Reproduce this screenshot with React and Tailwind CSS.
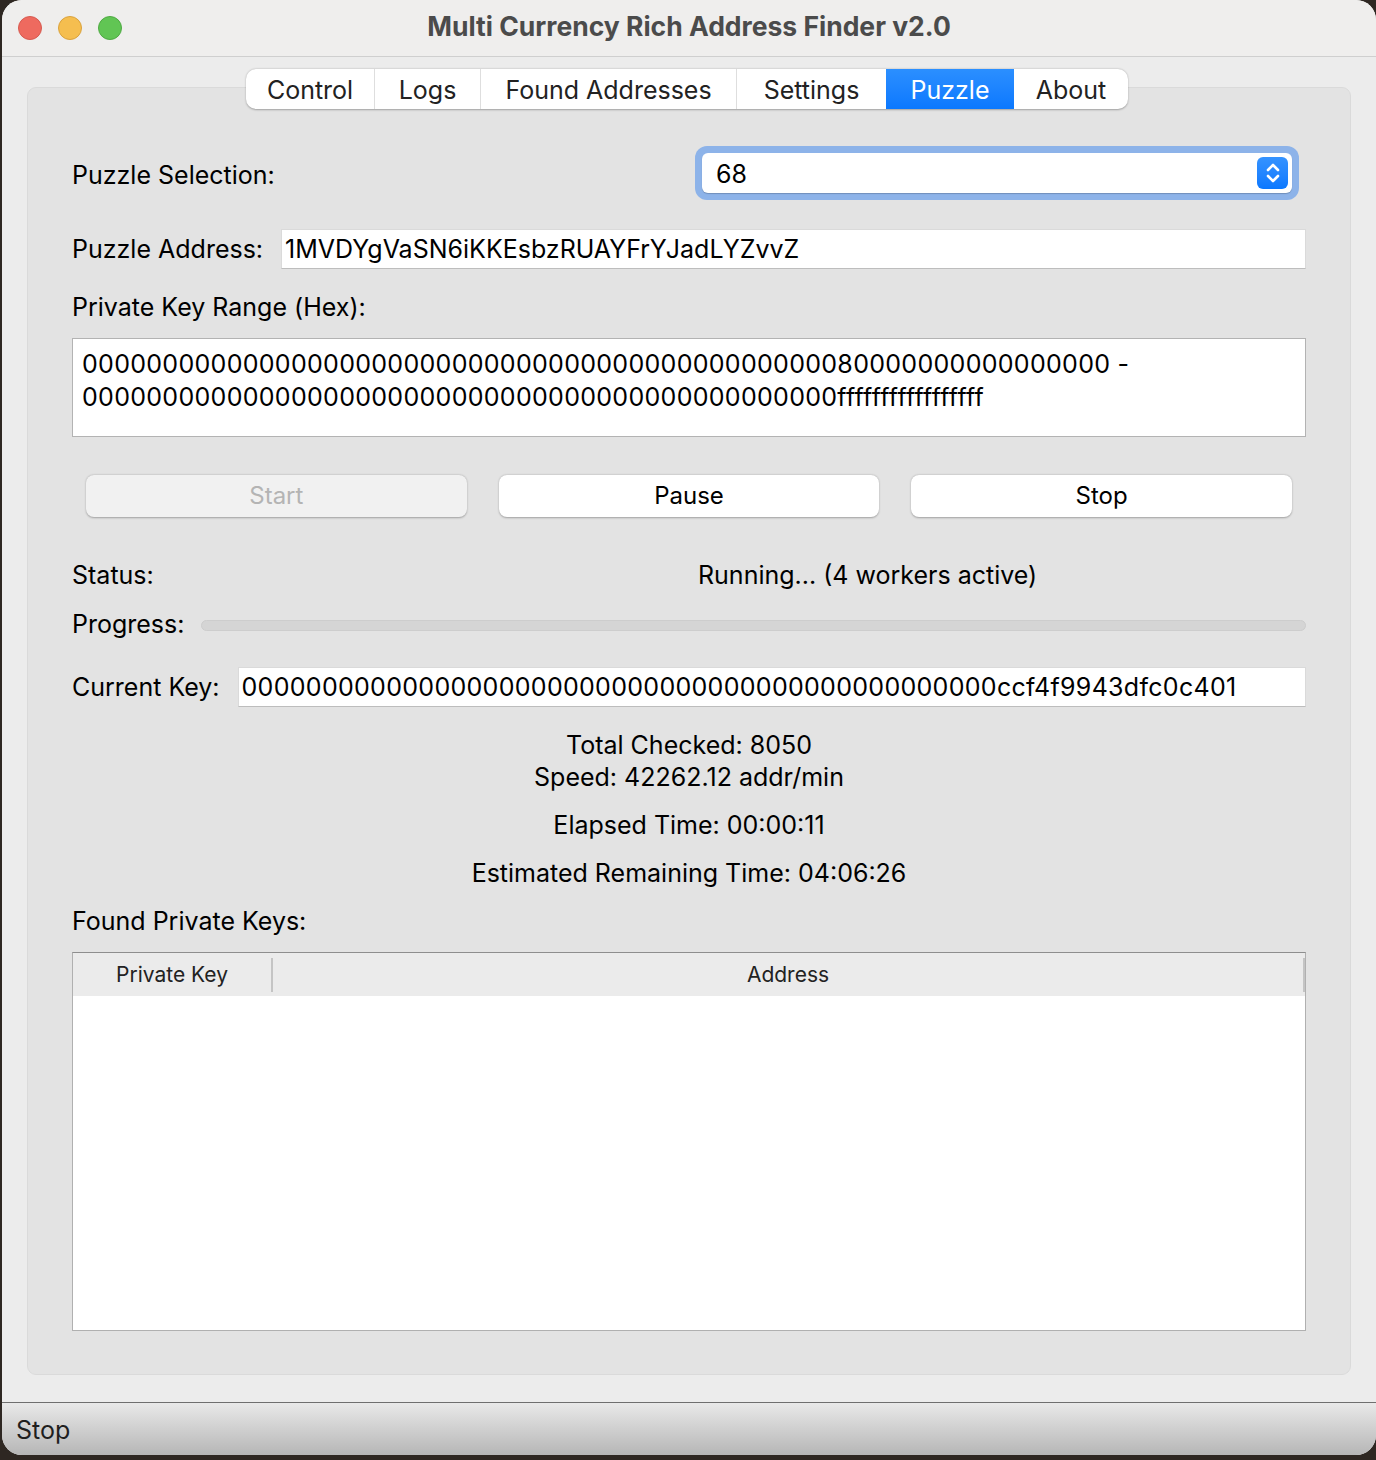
import React from "react";

const tabs = [
  { name: "Control", w: "w-[128px]" },
  { name: "Logs", w: "w-[106px]" },
  { name: "Found Addresses", w: "w-[256px]" },
  { name: "Settings", w: "w-[150px]" },
  { name: "Puzzle", w: "w-[128px]", active: true },
  { name: "About", w: "w-[114px]" },
];

const zeros = "0".repeat(47);

function Tabs() {
  return (
    <div className="relative z-10 flex justify-center pr-[4px]">
      <div className="flex h-[40px] rounded-[10px] bg-white shadow-[0_0.5px_2px_rgba(0,0,0,0.3)] overflow-hidden">
        {tabs.map((t, i) => (
          <div
            key={t.name}
            className={`${t.w} flex items-center justify-center pt-[3px] text-[25px] ${
              t.active
                ? "bg-gradient-to-b from-[#2b8fff] to-[#0a78ff] text-white"
                : "text-[#222]"
            } ${i > 0 && !t.active && !tabs[i - 1].active ? "border-l border-[#dedede]" : ""}`}
          >
            {t.name}
          </div>
        ))}
      </div>
    </div>
  );
}

function Field({ children, className = "" }) {
  return (
    <div
      className={`h-[40px] bg-white border border-[#dadada] border-b-[#bdbdbd] flex items-center pt-[2px] text-[25px] text-black ${className}`}
    >
      {children}
    </div>
  );
}

function Button({ label, disabled }) {
  return (
    <div
      className={`h-[42px] rounded-[8px] flex items-center justify-center text-[24px] shadow-[0_0.5px_2px_rgba(0,0,0,0.3)] ${
        disabled ? "bg-[#f1f1f1] text-[#b4b4b4]" : "bg-white text-black"
      }`}
    >
      {label}
    </div>
  );
}

export default function App() {
  return (
    <div className="min-h-screen bg-[#2e2722] pl-[2px] font-['Inter',sans-serif]">
      <div className="w-[1374px] h-[1455px] rounded-[20px] overflow-hidden flex flex-col bg-[#ececec]">
        {/* title bar */}
        <div className="h-[57px] shrink-0 bg-[#efeeed] border-b border-[#cfcfcf] grid grid-cols-[1fr_auto_1fr] items-center">
          <div className="flex gap-[16px] pl-[16px]">
            <span className="w-[24px] h-[24px] rounded-full bg-[#ee6a5f] border border-[#d65a50]" />
            <span className="w-[24px] h-[24px] rounded-full bg-[#f5be4f] border border-[#d9a23e]" />
            <span className="w-[24px] h-[24px] rounded-full bg-[#61c554] border border-[#4fa943]" />
          </div>
          <div className="text-[26.5px] font-bold text-[#4b4b4b] pb-[2px]">
            Multi Currency Rich Address Finder v2.0
          </div>
          <div />
        </div>

        {/* content */}
        <div className="flex-1 px-[25px] pt-[12px]">
          <Tabs />
          <div className="-mt-[22px] h-[1288px] rounded-[9px] bg-[#e3e3e3] border border-[#dadada] px-[44px] pt-[58px] text-[25px] text-black">
            {/* puzzle selection */}
            <div className="h-[54px] flex items-center">
              <div className="flex-1 pt-[5px]">Puzzle Selection:</div>
              <div className="w-[604px] mr-[7px] h-[54px] rounded-[12px] bg-[#8db3e9] p-[7px]">
                <div className="h-full rounded-[6px] bg-white flex items-center pl-[14px] pr-[4px] shadow-[0_1px_1px_rgba(0,0,0,0.2)]">
                  <span className="flex-1 pt-[3px]">68</span>
                  <div className="w-[31px] h-[32px] rounded-[6px] bg-gradient-to-b from-[#3593ff] to-[#0a78ff] flex items-center justify-center">
                    <svg width="16" height="24" viewBox="0 0 16 24" fill="none" stroke="white" strokeWidth="2.6" strokeLinecap="round" strokeLinejoin="round">
                      <path d="M3 9l5-5 5 5" />
                      <path d="M3 15l5 5 5-5" />
                    </svg>
                  </div>
                </div>
              </div>
            </div>

            {/* puzzle address */}
            <div className="mt-[29px] flex items-center gap-[18px]">
              <div className="whitespace-nowrap pt-[2px]">Puzzle Address:</div>
              <Field className="flex-1 pl-[3px]">1MVDYgVaSN6iKKEsbzRUAYFrYJadLYZvvZ</Field>
            </div>

            <div className="mt-[23px] h-[30px] flex items-center pt-[2px]">Private Key Range (Hex):</div>

            <div className="mt-[16px] h-[99px] bg-white border border-[#b3b3b3] px-[9px] pt-[9px] leading-[33px] tracking-[0.3px]">
              <div>{zeros}80000000000000000 -</div>
              <div>{zeros}fffffffffffffffff</div>
            </div>

            {/* buttons */}
            <div className="mt-[38px] px-[14px] grid grid-cols-3 gap-[32px]">
              <Button label="Start" disabled />
              <Button label="Pause" />
              <Button label="Stop" />
            </div>

            {/* status */}
            <div className="mt-[40px] h-[30px] grid grid-cols-[626px_1fr] items-center">
              <div>Status:</div>
              <div>Running... (4 workers active)</div>
            </div>

            {/* progress */}
            <div className="mt-[23px] h-[30px] flex items-center gap-[17px]">
              <div>Progress:</div>
              <div className="flex-1 h-[11px] rounded-full bg-[#d5d5d5] border border-[#cdcdcd]" />
            </div>

            {/* current key */}
            <div className="mt-[27px] flex items-center gap-[18px]">
              <div className="whitespace-nowrap pt-[2px]">Current Key:</div>
              <Field className="flex-1 pl-[3px] tracking-[0.3px]">{zeros}ccf4f9943dfc0c401</Field>
            </div>

            {/* stats */}
            <div className="mt-[22px] text-center leading-[32px]">
              <div>Total Checked: 8050</div>
              <div>Speed: 42262.12 addr/min</div>
              <div className="mt-[16px]">Elapsed Time: 00:00:11</div>
              <div className="mt-[16px]">Estimated Remaining Time: 04:06:26</div>
            </div>

            <div className="mt-[17px] h-[30px] flex items-center pt-[2px]">Found Private Keys:</div>

            {/* table */}
            <div className="mt-[16px] h-[379px] bg-white border border-[#b0b0b0] border-t-[#8e8e8e] flex flex-col">
              <div className="h-[43px] bg-[#ebebeb] flex items-center text-[21px] text-[#222]">
                <div className="w-[200px] text-center border-r-2 border-[#c4c4c4] h-[34px] flex items-center justify-center">
                  Private Key
                </div>
                <div className="flex-1 text-center border-r-2 border-[#c4c4c4] h-[34px] flex items-center justify-center">
                  Address
                </div>
              </div>
              <div className="flex-1" />
            </div>
          </div>
        </div>

        {/* status bar */}
        <div className="h-[53px] mt-[27px] shrink-0 border-t border-[#6f6f6f] bg-gradient-to-b from-[#e9e9e9] to-[#b6b6b6] flex items-center pl-[14px] pt-[3px] text-[25px] text-[#1f1f1f]">
          Stop
        </div>
      </div>
    </div>
  );
}
